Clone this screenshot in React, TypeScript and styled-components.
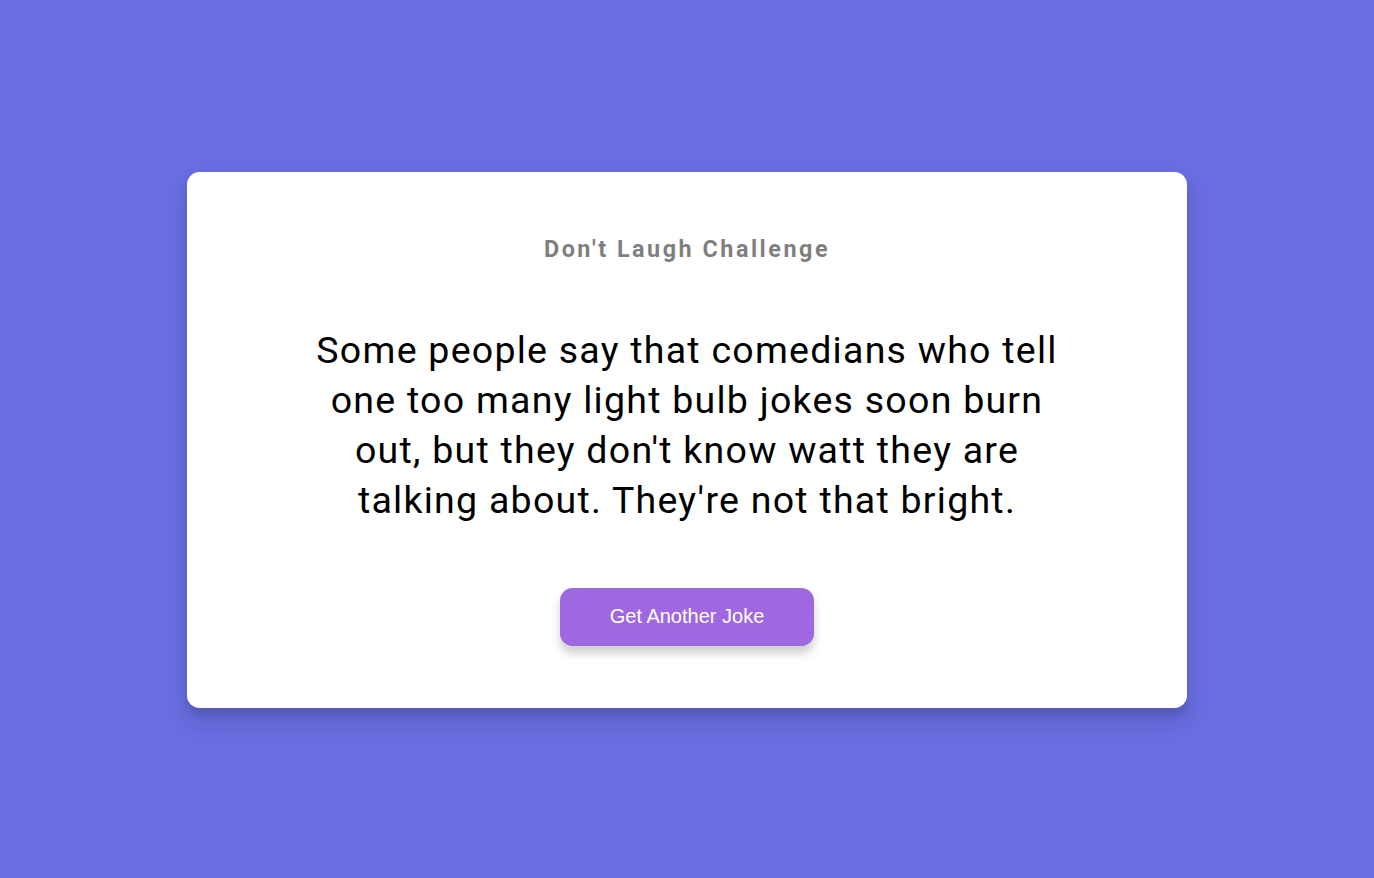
import React from "react";
import styled, { createGlobalStyle } from "styled-components";

const GlobalStyle = createGlobalStyle`
  * { box-sizing: border-box; }
  html, body { margin: 0; padding: 0; }
  body {
    background-color: #686de0;
    font-family: Roboto, "Liberation Sans", sans-serif;
  }
`;

const Page = styled.main`
  display: flex;
  align-items: center;
  justify-content: center;
  min-height: 100vh;
  padding: 2px 12.5px 0;
`;

const Card = styled.section`
  background-color: #fff;
  border-radius: 12.5px;
  box-shadow: 0 12.5px 25px rgba(0, 0, 0, 0.1), 0 7.5px 7.5px rgba(0, 0, 0, 0.1);
  padding: 62.5px 25px;
  text-align: center;
  width: 1000px;
  max-width: 100%;
`;

const Title = styled.h3`
  margin: 0;
  font-size: 23.4px;
  font-weight: 700;
  opacity: 0.5;
  letter-spacing: 2.5px;
  color: #000;
`;

const Joke = styled.div`
  font-size: 37.5px;
  letter-spacing: 1.25px;
  line-height: 50px;
  margin: 62.5px auto;
  max-width: 750px;
  color: #000;
`;

const Button = styled.button`
  background-color: #9f68e0;
  color: #fff;
  border: 0;
  border-radius: 12.5px;
  box-shadow: 0 6.25px 12.5px rgba(0, 0, 0, 0.1), 0 7.5px 7.5px rgba(0, 0, 0, 0.1);
  padding: 17.5px 50px;
  font-family: "Liberation Sans", Arial, sans-serif;
  font-size: 20px;
  cursor: pointer;
`;

export default function App() {
  return (
    <>
      <GlobalStyle />
      <Page>
        <Card>
          <Title>Don't Laugh Challenge</Title>
          <Joke>
            Some people say that comedians who tell one too many light bulb jokes soon burn
            out, but they don't know watt they are talking about. They're not that bright.
          </Joke>
          <Button>Get Another Joke</Button>
        </Card>
      </Page>
    </>
  );
}
